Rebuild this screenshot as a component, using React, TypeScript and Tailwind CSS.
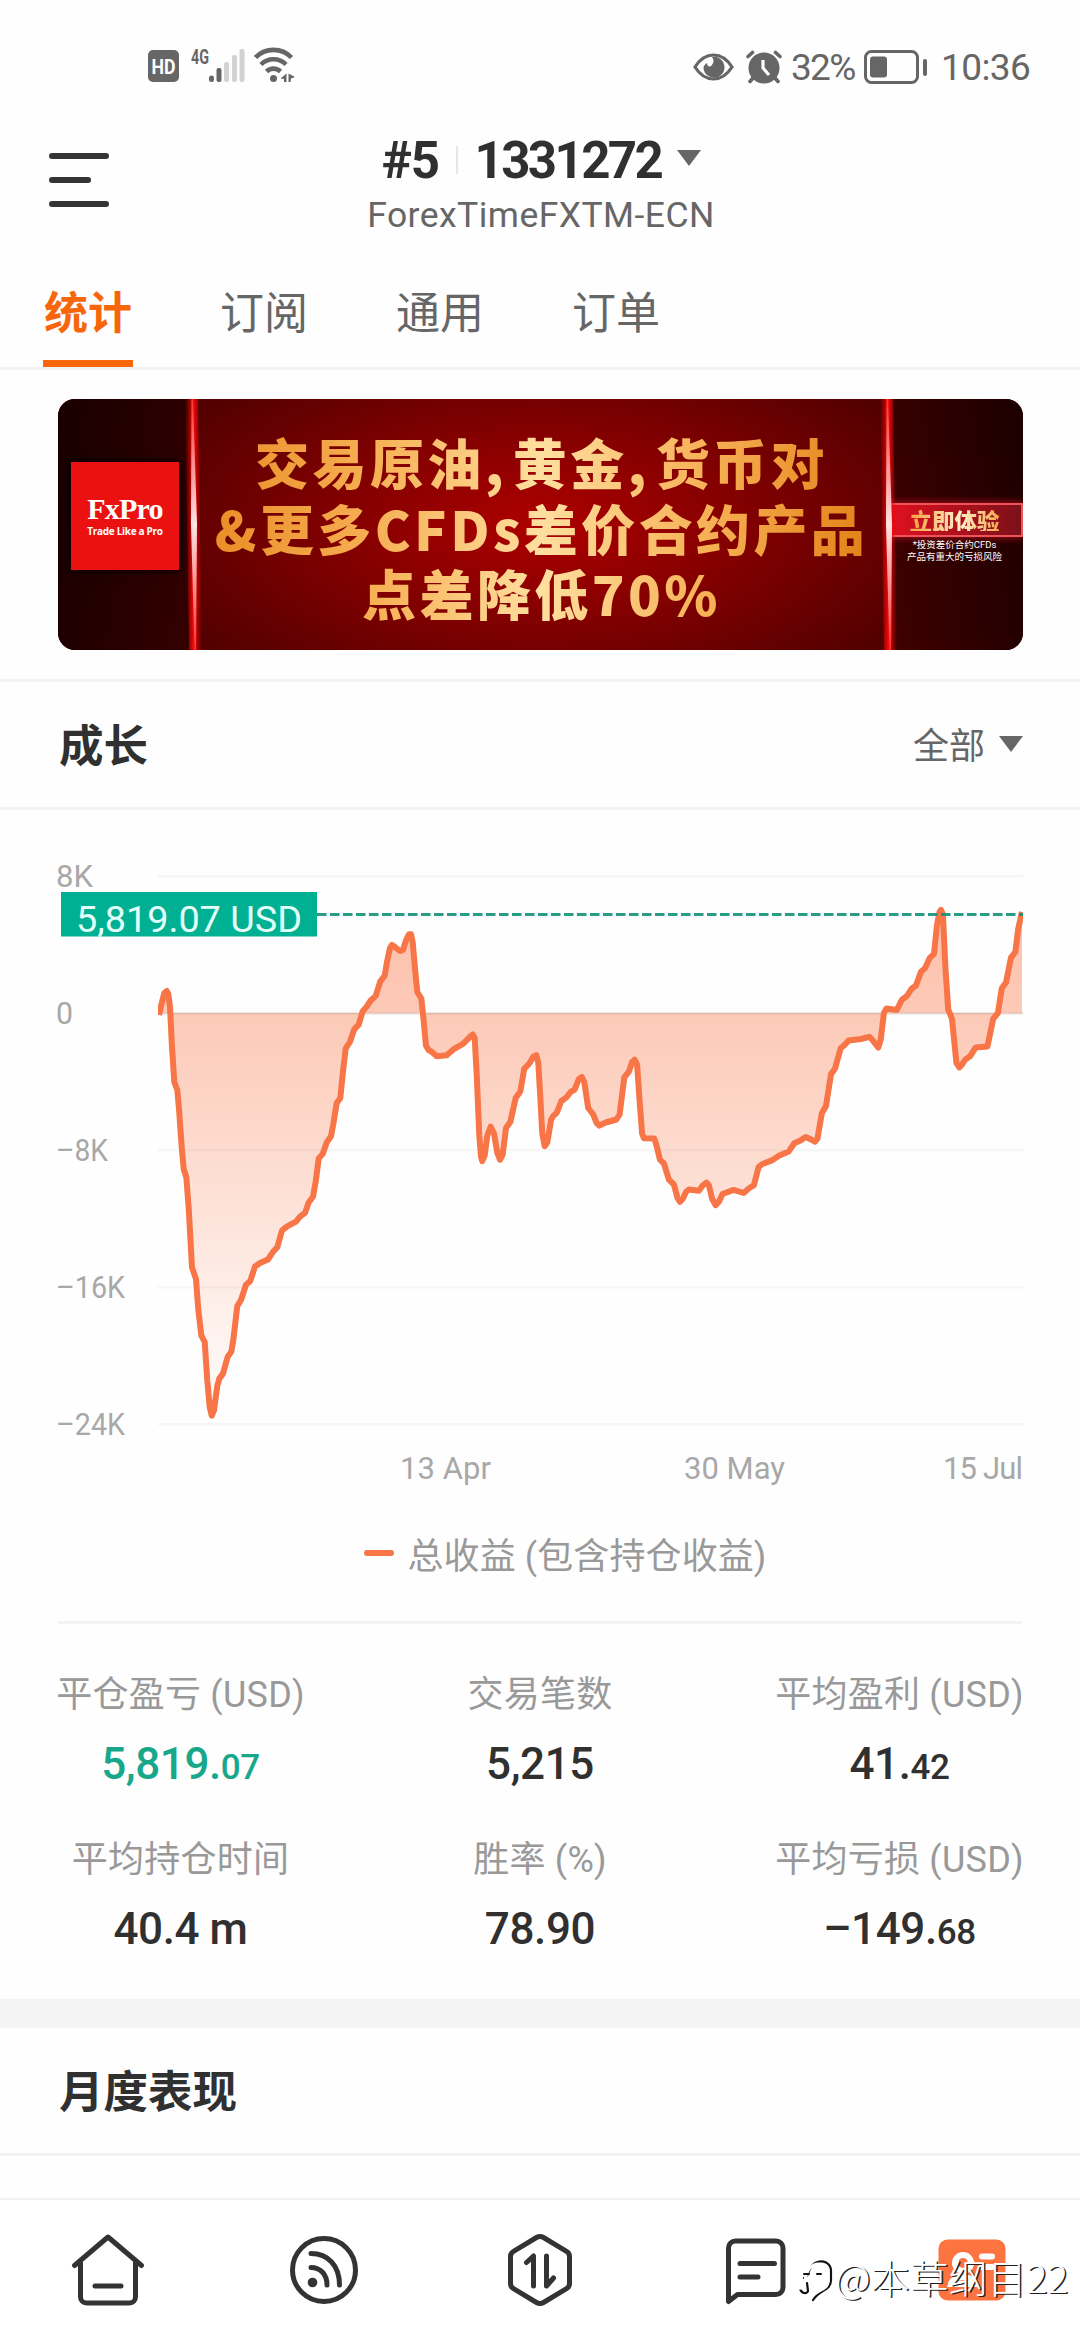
const LATIN = "font-['Roboto','Noto_Sans_CJK_SC',sans-serif]";

const tabs = ["统计", "订阅", "通用", "订单"];

const stats = [
    { label: "平仓盈亏 (USD)", value: "5,819.", small: "07", green: true },
    { label: "交易笔数", value: "5,215", small: "" },
    { label: "平均盈利 (USD)", value: "41.", small: "42" },
    { label: "平均持仓时间", value: "40.4 m", small: "" },
    { label: "胜率 (%)", value: "78.90", small: "" },
    { label: "平均亏损 (USD)", value: "–149.", small: "68" },
];

const gridLines = [
    { y: 66, label: "8K", width: 37 },
    { y: 203, label: "0", width: 17 },
    { y: 340, label: "–8K", width: 52 },
    { y: 477, label: "–16K", width: 69 },
    { y: 614, label: "–24K", width: 69 },
];

// x, y pairs of the equity curve; y is shifted by CHART_TOP when drawn
const CHART_TOP = 810;
const points: [number, number][] = [
    [159, 1015], [162, 1002], [164.3, 993], [166.7, 991], [168.3, 994], [170, 1007], [172, 1047], [174.3, 1082],
    [177.3, 1090], [179, 1109], [181.7, 1147], [183.7, 1169], [186.3, 1177], [188.7, 1208], [192, 1267.6], [196, 1279],
    [198.3, 1309.7], [201.3, 1335.3], [204.7, 1342], [207.3, 1380.5], [209.7, 1407], [211.7, 1415.7], [214, 1410.3],
    [217.3, 1386], [219.3, 1378.6], [223, 1373.6], [227.7, 1356.7], [231.3, 1351.8], [233.3, 1340], [237.3, 1306],
    [241, 1300], [246, 1284.8], [250.3, 1281], [255, 1266.4], [260, 1263], [268, 1259.5], [272.7, 1252.3],
    [277.3, 1247.3], [282, 1230.5], [286.7, 1226.6], [296, 1221.6], [300, 1216.7], [305, 1212.9], [308.7, 1202.5],
    [313, 1196.8], [315.7, 1181.5], [318.7, 1158.5], [322.7, 1153.9], [326.7, 1142.4], [331, 1136.3], [333.3, 1124],
    [336.7, 1103], [340.3, 1098], [342.7, 1074.3], [345.7, 1048.3], [350, 1041.8], [354.3, 1029.2], [358.7, 1024.6],
    [362.7, 1011.2], [366.7, 1006.6], [370.7, 1000.5], [375.7, 995.9], [380.3, 981.3], [384.7, 975.6], [387.3, 960.3],
    [390, 948], [392, 945], [395.3, 947.3], [400, 951], [403, 950], [406, 940.4], [409, 934.2], [411, 934.2],
    [412.7, 942.3], [415, 969], [417.3, 992], [421.3, 998.5], [423.3, 1017], [426, 1045.6], [428.7, 1050.2],
    [432, 1052], [436.7, 1056.3], [446.7, 1055.2], [453.3, 1049.4], [463.3, 1043.7], [470, 1036.8], [472.7, 1034.5],
    [474.7, 1038], [476.7, 1074.3], [479.3, 1135.5], [481, 1156.6], [482.3, 1161.2], [484.7, 1155.4], [487.3, 1135.5],
    [490.7, 1126.7], [494, 1133.6], [497.3, 1152.8], [500, 1159.7], [502.7, 1154.7], [506, 1128], [510.3, 1122],
    [515.7, 1098], [520.3, 1091.5], [524.3, 1068.6], [529.3, 1063.6], [533.3, 1056.7], [536.3, 1055.2], [538.3, 1062.8],
    [540.3, 1097.3], [542.3, 1133.6], [544.7, 1146.3], [547.3, 1142.4], [551, 1120.2], [552.9, 1116.4], [556.8, 1112.6],
    [561.4, 1101], [566.4, 1097.3], [570.7, 1091.9], [574.6, 1089.6], [578.9, 1078.9], [581.8, 1077], [584.3, 1082],
    [588.2, 1108], [593.2, 1114.5], [596.8, 1123.3], [599.3, 1125.6], [605.7, 1122.5], [616.4, 1119.5], [619.6, 1114.5],
    [624.3, 1077.4], [628.9, 1071.6], [632.1, 1062], [634.6, 1059.8], [637.1, 1064.7], [639.6, 1101], [642.1, 1133.6],
    [643.9, 1138.2], [654.3, 1138.6], [656.4, 1145], [660, 1159.7], [663.9, 1163.5], [668.9, 1179.6], [673.9, 1184.5],
    [677.5, 1197.9], [680, 1201.8], [682.9, 1198.7], [686.1, 1191.8], [688.9, 1189.5], [698.9, 1190.7], [702.9, 1185.3],
    [706.4, 1182.6], [708.9, 1185.3], [712.1, 1198.7], [715.7, 1205.2], [718.9, 1201.8], [722.5, 1194], [733.6, 1189.9],
    [743.6, 1193], [749.3, 1188], [753.9, 1185.3], [758.6, 1167], [762, 1164.2], [771.8, 1160.4], [778.9, 1155.8],
    [788.6, 1151.6], [794.3, 1143.2], [800.4, 1140.5], [805.7, 1137], [811, 1139.4], [815, 1141.7], [817.5, 1138.6],
    [821.8, 1113.3], [826, 1106], [831, 1074.3], [835, 1068.6], [840.7, 1048.3], [845, 1044.5], [848.6, 1040.6],
    [861, 1039], [869.3, 1036.8], [872.9, 1040.6], [878.2, 1047.5], [880.7, 1039.9], [883.9, 1013], [886.4, 1008.5],
    [896.8, 1010], [902, 999.7], [907, 995.9], [911.4, 989], [916, 985.5], [921, 971.7], [925, 968.3], [930, 957.6],
    [934, 953.8], [937, 925], [939.6, 911.7], [941, 909.8], [942.9, 914.3], [945.4, 967.2], [948.2, 1009.3],
    [952, 1018.8], [956.4, 1062.8], [959.3, 1067.4], [961.8, 1064.7], [965.4, 1059.4], [970, 1056.3], [975.7, 1047.5],
    [987.5, 1046.4], [993.2, 1018.8], [997.9, 1013], [1001.8, 988.2], [1006, 982.5], [1011, 957.6], [1015.4, 951.8],
    [1018.2, 928.9], [1022, 912],
];

const linePath = "M" + points.map(([x, y]) => `${x} ${(y - CHART_TOP).toFixed(1)}`).join("L");

function StatusBar() {
    return (
        <div className="h-[110px] shrink-0 pt-[46px] pl-[148px] pr-[52px] flex justify-between text-[#666]">
            <svg width="148" height="40" viewBox="0 0 148 40" fill="currentColor">
                <rect x="0" y="4" width="31" height="32" rx="5" />
                <text x="3.5" y="28" fontSize="21" fontWeight="700" fill="#fff" textLength="24" lengthAdjust="spacingAndGlyphs" className={LATIN}>HD</text>
                <text x="43" y="18" fontSize="21" fontWeight="700" textLength="18" lengthAdjust="spacingAndGlyphs" className={LATIN}>4G</text>
                <rect x="61" y="29.500" width="5" height="6.500" rx="2.500" />
                <rect x="68.500" y="22" width="5" height="14" rx="2" />
                <g fill="#d2d2d2">
                    <rect x="76" y="16" width="5" height="20" rx="2" />
                    <rect x="84" y="9" width="5" height="27" rx="2" />
                    <rect x="91.500" y="3" width="5" height="33" rx="2" />
                </g>
                <g fill="none" stroke="currentColor" strokeWidth="4.600">
                    <path d="M107.500 11.500a25 25 0 0 1 36 0" />
                    <path d="M113 18.500a17.500 17.500 0 0 1 25 0" />
                    <path d="M118.500 25.500a10 10 0 0 1 14 0" />
                </g>
                <circle cx="125.500" cy="32.500" r="3.500" />
                <path d="M138.500 27.500v8.500h-2.500v-3l-3.500-.5zM140.500 27.500l6.500 3.500-4 1.500-.5 3.500h-2z" />
            </svg>
            <div className="flex h-[41px] items-center">
                <svg width="41" height="28" viewBox="0 0 41 28">
                    <path d="M2 14C7 6 13 2 20.500 2S34 6 39 14c-5 8-11 12-18.500 12S7 22 2 14Z" fill="none" stroke="currentColor" strokeWidth="3.200" />
                    <path d="M19 4c3 4 1 7-1 9-2 1.500-4 0-4-3-2 1-3.500 3-3.500 5a10.500 10.500 0 1 0 8.500-11Z" fill="currentColor" />
                </svg>
                <svg width="36" height="34" viewBox="0 0 36 34" className="ml-3">
                    <g stroke="currentColor" strokeWidth="3.600" strokeLinecap="round">
                        <path d="M2 6.500l4.500-4M34 6.500l-4.500-4M7 28l-3 3.500M29 28l3 3.500" />
                    </g>
                    <circle cx="18" cy="18" r="15.500" fill="currentColor" />
                    <path d="M17 10v8l6 7" fill="none" stroke="#fff" strokeWidth="3.200" />
                </svg>
                <span className="ml-[9px] mt-[2px] w-[67px] text-[37px] leading-[40px] tracking-[-1.700px] whitespace-nowrap">32%</span>
                <svg width="64" height="34" viewBox="0 0 64 34" className="ml-[6px]">
                    <rect x="1.500" y="1.500" width="52" height="31" rx="6" fill="none" stroke="currentColor" strokeWidth="3" />
                    <rect x="6" y="6.500" width="17" height="21" rx="3" fill="currentColor" />
                    <rect x="59" y="9" width="4" height="17" rx="2" fill="currentColor" />
                </svg>
                <span className="ml-[13px] mt-[2px] w-[87px] text-[37px] leading-[40px] tracking-[-0.600px] whitespace-nowrap">10:36</span>
            </div>
        </div>
    );
}

function Header() {
    return (
        <header className="h-[140px] shrink-0 grid grid-cols-[240px_1fr_240px]">
            <div className="pl-[49px] pt-[43px] flex flex-col gap-[18px]">
                <i className="h-1.5 w-[60px] rounded-full bg-[#333]" />
                <i className="h-1.5 w-[42px] rounded-full bg-[#333]" />
                <i className="h-1.5 w-[60px] rounded-full bg-[#333]" />
            </div>
            <div className="flex flex-col items-center pt-[22px]">
                <div className="flex items-center h-[56px] pl-[3px] text-[51px] font-bold text-[#303030] leading-none">
                    <span className="tracking-[-1.400px]">#5</span>
                    <i className="mx-[17px] w-0.5 h-7 bg-[#e6e6e6]" />
                    <span className="tracking-[-2.600px]">1331272</span>
                    <svg width="24" height="16" viewBox="0 0 24 16" className="ml-[16px] -mt-[4px]">
                        <path d="M0 0h24L12 16z" fill="#666" />
                    </svg>
                </div>
                <div className="mt-1 pl-[2px] text-[35.500px] leading-[46px] tracking-[0.450px] text-[#666]">ForexTimeFXTM-ECN</div>
            </div>
        </header>
    );
}

function Banner() {
    return (
        <div className="px-[58px] pt-[29px] h-[312px] shrink-0 border-b-[3px] border-[#f2f2f2]">
            <div className="w-[965px] h-[251px] rounded-[17px] overflow-hidden flex bg-[radial-gradient(ellipse_420px_200px_at_50%_50%,#ae0000,#7c0000_55%,#520000)]">
                <div className="w-[136px] shrink-0 pl-[13px] pt-[63px] bg-[linear-gradient(100deg,#180000,#350000)]">
                    <div className="w-[108px] h-[108px] bg-[#ec1111] flex flex-col items-center pt-[31px] text-white shadow-[0_0_10px_#000]">
                        <span className="font-['Liberation_Serif',serif] font-bold text-[30px] leading-[31px] tracking-[-0.800px]">FxPro</span>
                        <span className="font-['Open_Sans',sans-serif] font-bold text-[10px] leading-[14px] tracking-[-0.300px] whitespace-nowrap">Trade Like a Pro</span>
                    </div>
                </div>
                <Beam />
                <div className="flex-1 flex flex-col items-center justify-center pt-[6px] font-['Noto_Sans_CJK_SC',sans-serif] font-black text-[54px] leading-[65.500px] tracking-[3.400px] whitespace-nowrap text-transparent bg-clip-text bg-[linear-gradient(90deg,#e88a22,#f6ae52_25%,#ffdf9f_50%,#f6ae52_75%,#e07c10)]">
                    <span className="[word-spacing:-10px]">交易原油, 黄金, 货币对</span>
                    <span>&amp;更多CFDs差价合约产品</span>
                    <span>点差降低70%</span>
                </div>
                <Beam />
                <div className="w-[134px] shrink-0 flex flex-col items-center pt-[104px] text-white bg-[linear-gradient(80deg,#400000,#1c0000)]">
                    <div className="w-full h-[34px] border-2 border-[#f0545a] bg-[linear-gradient(90deg,#e01020,#7c1018)] flex items-center justify-center shadow-[0_0_8px_#c01020]">
                        <span className="pr-[3px] font-['Noto_Sans_CJK_SC',sans-serif] font-black text-[22.500px] leading-none text-transparent bg-clip-text bg-[linear-gradient(90deg,#f5a040,#fff0c8_55%,#f5a040)]">立即体验</span>
                    </div>
                    <div className="mt-[2px] pr-[3px] flex flex-col items-center text-[9.500px] leading-[12px] whitespace-nowrap">
                        <span>*投资差价合约CFDs</span>
                        <span>产品有重大的亏损风险</span>
                    </div>
                </div>
            </div>
        </div>
    );
}

function Beam() {
    return (
        <svg width="20" height="251" viewBox="0 0 20 251" className="shrink-0 -mx-[10px] z-10">
            <defs>
                <linearGradient id="glow">
                    <stop offset="0" stopColor="#e00" stopOpacity="0" />
                    <stop offset="0.5" stopColor="#f00a0a" />
                    <stop offset="1" stopColor="#e00" stopOpacity="0" />
                </linearGradient>
                <linearGradient id="core" x2="0" y2="1">
                    <stop offset="0" stopColor="#f33" />
                    <stop offset="0.5" stopColor="#ffe4e4" />
                    <stop offset="1" stopColor="#f33" />
                </linearGradient>
            </defs>
            <path d="M1 0h13l4 251H5z" fill="url(#glow)" />
            <path d="M7.500 0h1.500l4 125-1 126h-1.500L7 125z" fill="url(#core)" />
        </svg>
    );
}

function SectionTitle({ title, filter }: { title: string; filter?: string }) {
    return (
        <div className="h-[128px] shrink-0 pl-[59px] pr-[57px] pt-[5px] flex items-center justify-between border-b-[3px] border-[#f2f2f2]">
            <h2 className="text-[44.500px] font-bold leading-none text-[#303030]">{title}</h2>
            {filter && (
                <div className="flex items-center text-[36px] text-[#666] leading-none">
                    {filter}
                    <svg width="24" height="16" viewBox="0 0 24 16" className="ml-[14px] -mt-1.5">
                        <path d="M0 0h24L12 16z" fill="#666" />
                    </svg>
                </div>
            )}
        </div>
    );
}

function GrowthChart() {
    return (
        <svg width="1080" height="700" viewBox="0 0 1080 700" className={`shrink-0 ${LATIN}`}>
            <defs>
                <linearGradient id="area" gradientUnits="userSpaceOnUse" x1="0" y1="100" x2="0" y2="614">
                    <stop offset="0" stopColor="#fa7343" stopOpacity="0.440" />
                    <stop offset="0.2" stopColor="#fa7343" stopOpacity="0.380" />
                    <stop offset="1" stopColor="#fa7343" stopOpacity="0" />
                </linearGradient>
                <clipPath id="plot">
                    <rect x="158" y="60" width="865" height="570" />
                </clipPath>
            </defs>
            {gridLines.map((line) => (
                <g key={line.label}>
                    <rect x="158" y={line.y - 1} width="865" height="2.500" fill="#f6f6f6" />
                    <text x="56" y={line.y + 10.5} fontSize="32" fill="#a8a8a8" textLength={line.width} lengthAdjust="spacingAndGlyphs">{line.label}</text>
                </g>
            ))}
            <g clipPath="url(#plot)">
                <path d={`${linePath}V203H159Z`} fill="url(#area)" />
                <path d="M160 203.500H1023" stroke="#c9a090" strokeOpacity="0.350" strokeWidth="2" />
                <path d={linePath} fill="none" stroke="#f77547" strokeWidth="6" strokeLinejoin="round" />
            </g>
            <path d="M317 104.500H1023" stroke="#17937c" strokeOpacity="0.920" strokeWidth="2.800" strokeDasharray="9.500 3.500" />
            <rect x="61" y="82" width="256" height="44.500" fill="#00b092" />
            <text x="76" y="122" fontSize="36.500" fill="#e2fffa" textLength="226" lengthAdjust="spacingAndGlyphs">5,819.07 USD</text>
            <g fontSize="31" fill="#a8a8a8">
                <text x="400" y="669" textLength="91">13 Apr</text>
                <text x="684" y="669" textLength="101">30 May</text>
                <text x="943" y="669" textLength="80">15 Jul</text>
            </g>
        </svg>
    );
}

function Stats() {
    return (
        <div className="grid grid-cols-[361px_358px_361px] h-[375px] shrink-0 pt-[44px] content-start">
            {stats.map((item) => (
                <div key={item.label} className="h-[165px] flex flex-col items-center">
                    <span className="text-[36px] leading-[54px] tracking-[0.250px] text-[#999]">{item.label}</span>
                    <span className={`mt-[12px] text-[44px] leading-[60px] font-medium tracking-[-0.400px] ${item.green ? "text-[#18a78b]" : "text-[#303030]"}`}>
                        {item.value}
                        <span className="text-[35px]">{item.small}</span>
                    </span>
                </div>
            ))}
        </div>
    );
}

function BottomNav() {
    const line = { fill: "none", stroke: "#333", strokeWidth: 5, strokeLinecap: "round", strokeLinejoin: "round" } as const;
    return (
        <nav className="mt-auto h-[142px] shrink-0 grid grid-cols-5 items-center justify-items-center border-t-2 border-[#f1f1f1] bg-white">
            <svg width="74" height="74" viewBox="0 0 74 74" {...line}>
                <path d="M3.500 32.500 37 4l33.500 28.500M9.500 30v34a6 6 0 0 0 6 6h43a6 6 0 0 0 6-6V30M24 53h26" />
            </svg>
            <svg width="74" height="74" viewBox="0 0 74 74" {...line}>
                <circle cx="37" cy="37" r="31.500" />
                <path d="M24 20.500c17 0 28.500 12 28.500 31.500M24 34.500c9.500 0 16 7 16 17.500" />
                <circle cx="25.500" cy="49.500" r="4.800" fill="#333" stroke="none" />
            </svg>
            <svg width="74" height="74" viewBox="0 0 74 74" {...line}>
                <path d="M33.500 4.500a7 7 0 0 1 7 0l23 13.800a6 6 0 0 1 3 5.200v27a6 6 0 0 1-3 5.200L40.500 69.500a7 7 0 0 1-7 0l-23-13.800a6 6 0 0 1-3-5.200v-27a6 6 0 0 1 3-5.200Z" />
                <path d="M23.500 29.500 30.500 23v30M43.500 23v30l7-8" />
            </svg>
            <svg width="74" height="74" viewBox="0 0 74 74" {...line}>
                <path d="M9.500 68.500V15a7 7 0 0 1 7-7H57a7 7 0 0 1 7 7v39.500a7 7 0 0 1-7 7H18.500ZM21 30.500h34.500M21 44h18" />
            </svg>
            <svg width="68" height="62" viewBox="0 0 68 62">
                <rect x="0.500" y="0.500" width="67" height="61" rx="9" fill="#fd7441" />
                <g fill="none" stroke="#fff" strokeWidth="6" strokeLinecap="round">
                    <circle cx="25" cy="24" r="8" />
                    <path d="M13 45c2-9 22-9 24 0ZM44 17.500h10M44 28h10" />
                </g>
            </svg>
        </nav>
    );
}

function Watermark() {
    return (
        <div className="absolute left-[796px] top-[2249px] flex items-center h-[54px] text-white">
            <svg width="39" height="58" viewBox="0 0 39 58" fill="none" strokeLinecap="round">
                <path d="M8 31c6-1 3-10 11-15 8-4 16 0 16 8v9c0 11-11 9-18 20M4 42c2 5 7 5 8 2l-1-8" stroke="#111" strokeWidth="2.200" />
                <path d="M2 41c9 2 5-11 11-19 6-8 19-6 19 3v9c0 9-9 8-15 14" stroke="#fff" strokeWidth="3" />
                <path d="M8 27h5M21 27h4" stroke="#111" strokeWidth="2" />
            </svg>
            <span className="font-['Noto_Sans_CJK_SC',sans-serif] font-light text-[39px] leading-none whitespace-nowrap [text-shadow:1.500px_1px_0_#222]">@本草纲目22</span>
        </div>
    );
}

export default function App() {
    return (
        <div className={`relative w-[1080px] h-[2340px] overflow-hidden flex flex-col bg-[#fefefe] ${LATIN}`}>
            <StatusBar />
            <Header />
            <div className="h-[120px] shrink-0 pl-[44px] flex gap-[88px] border-b-[3px] border-[#f2f2f2]">
                {tabs.map((tab, i) => (
                    <div key={tab} className={`relative pt-[34px] text-[44px] leading-[60px] ${i === 0 ? "font-bold text-[#f8660c]" : "text-[#666]"}`}>
                        {tab}
                        {i === 0 && <i className="absolute -left-px bottom-0 h-[7px] w-[90px] bg-[#f8660c]" />}
                    </div>
                ))}
            </div>
            <Banner />
            <SectionTitle title="成长" filter="全部" />
            <GrowthChart />
            <div className="h-[111px] shrink-0 pt-[22px] flex justify-center text-[36px] leading-[50px] tracking-[0.100px] text-[#999]">
                <i className="mt-[18px] ml-[50px] mr-[14px] h-1.5 w-[30px] rounded-full bg-[#f77547]" />
                总收益 (包含持仓收益)
            </div>
            <div className="mx-[58px] h-[3px] shrink-0 bg-[#f2f2f2]" />
            <Stats />
            <div className="h-[29px] shrink-0 bg-[#f4f4f4]" />
            <SectionTitle title="月度表现" />
            <BottomNav />
            <Watermark />
        </div>
    );
}
